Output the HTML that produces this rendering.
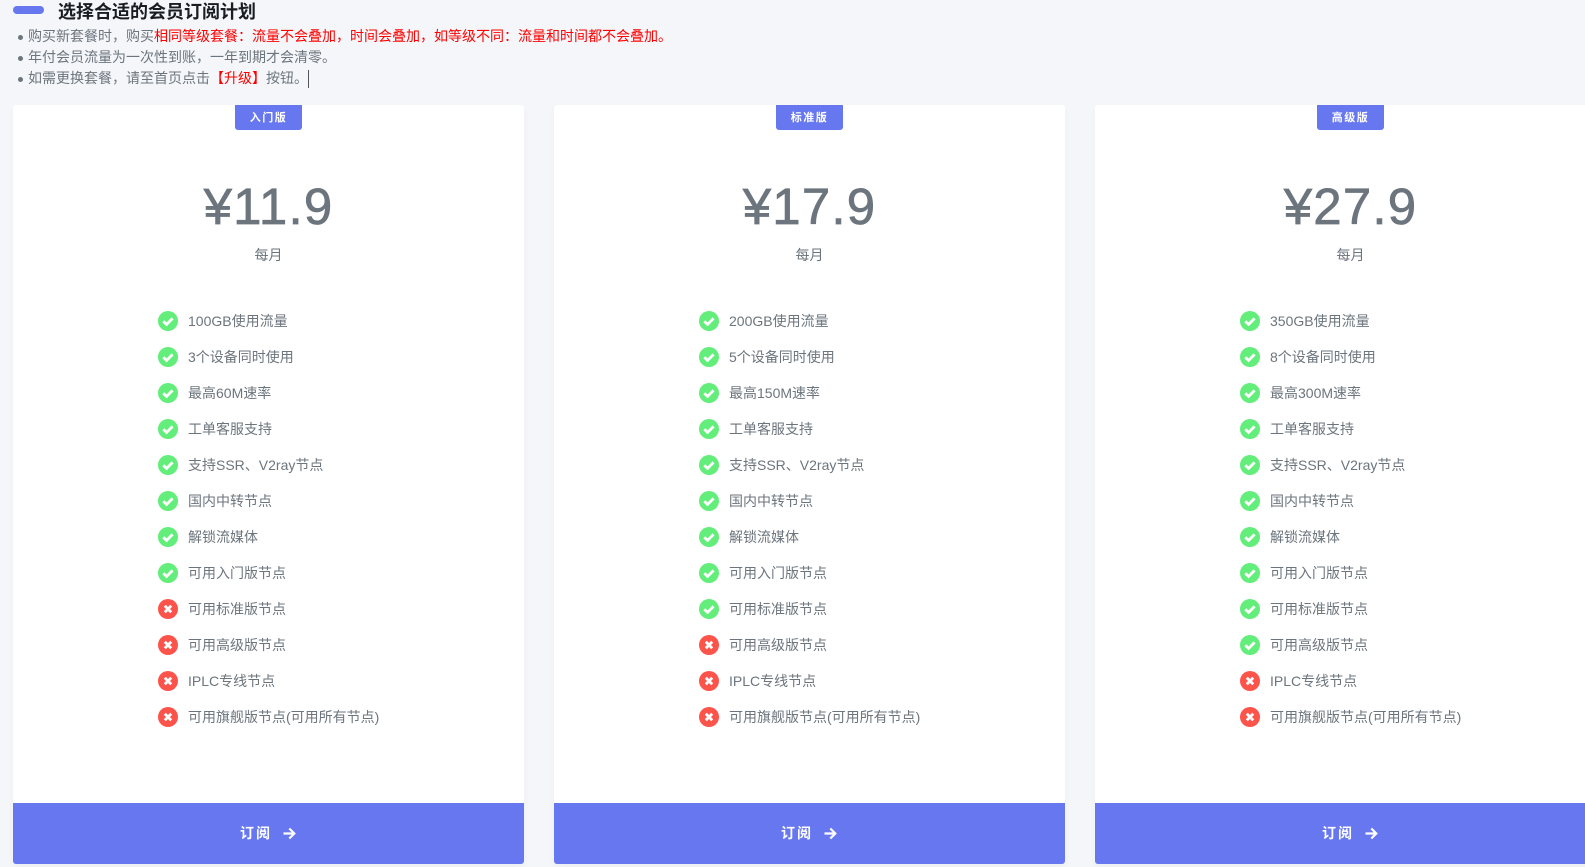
<!DOCTYPE html>
<html lang="zh-CN"><head><meta charset="utf-8"><title>选择合适的会员订阅计划</title>
<style>
*{box-sizing:border-box;margin:0;padding:0}
html,body{width:1585px;height:867px;overflow:hidden;background:#f4f6f9}
body{position:relative;font-family:"Liberation Sans","Noto Sans CJK SC",sans-serif;color:#6c757d;font-size:14px}
.pill{position:absolute;left:13px;top:6px;width:31px;height:8px;border-radius:4px;background:#6777ef}
h1{position:absolute;left:58px;top:1px;font-size:18px;line-height:22px;font-weight:700;color:#191d21;white-space:nowrap}
.n{position:absolute;left:28px;line-height:21px;white-space:nowrap}
.n:before{content:"";position:absolute;left:-10px;top:9px;width:5px;height:5px;border-radius:50%;background:#6c757d}
.n b{font-weight:400;color:#f00}
.caret{position:absolute;left:308px;top:70px;width:1px;height:18px;background:#555}
.card{position:absolute;top:105px;width:511px;height:759px;background:#fff;border-radius:3px;box-shadow:0 4px 8px rgba(0,0,0,.03)}
.badge{position:absolute;left:222px;top:0;width:67px;height:25px;background:#6777ef;border-radius:0 0 3px 3px;color:#fff;font-size:11px;font-weight:700;line-height:26px;text-align:center;letter-spacing:1.5px}
.price{position:absolute;left:0;width:100%;top:70px;text-align:center;font-size:51px;line-height:64px;letter-spacing:1.2px;-webkit-text-stroke:.7px #6c757d}
.per{position:absolute;left:0;width:100%;top:140px;text-align:center;line-height:20px}
ul{position:absolute;left:145px;top:198px;list-style:none}
li{position:relative;height:36px;line-height:36px;padding-left:30px;white-space:nowrap}
li svg{position:absolute;left:0;top:8px;width:20px;height:20px}
.btn{position:absolute;left:0;bottom:0;width:100%;height:61px;background:#6777ef;border-radius:0 0 3px 3px;color:#fff;font-weight:700;line-height:60px}
.btn span{position:absolute;left:227px;top:0;letter-spacing:2px;line-height:60px}
.btn svg{position:absolute;left:270px;top:24px;width:13px;height:13px}
</style></head><body>
<svg width="0" height="0" style="position:absolute"><defs>
<symbol id="y" viewBox="0 0 20 20"><circle cx="10" cy="10" r="10" fill="#63ed7a"/><path d="M5.3 10.2l3.3 3.2 6-6" fill="none" stroke="#fff" stroke-width="2.8"/></symbol>
<symbol id="x" viewBox="0 0 20 20"><circle cx="10" cy="10" r="10" fill="#fc544b"/><path d="M6.8 6.8l6.4 6.4M13.2 6.8l-6.4 6.4" fill="none" stroke="#fff" stroke-width="2.8"/></symbol>
<symbol id="a" viewBox="0 0 13 13"><path d="M.5 6.5h10.5M6.3 1.5l5 5-5 5" fill="none" stroke="#fff" stroke-width="2.2"/></symbol>
</defs></svg>
<div class="pill"></div>
<h1>选择合适的会员订阅计划</h1>
<div class="n" style="top:26px">购买新套餐时，购买<b>相同等级套餐：流量不会叠加，时间会叠加，如等级不同：流量和时间都不会叠加。</b></div>
<div class="n" style="top:47px">年付会员流量为一次性到账，一年到期才会清零。</div>
<div class="n" style="top:68px">如需更换套餐，请至首页点击<b>【升级】</b>按钮。</div>
<div class="caret"></div>

<div class="card" style="left:13px">
<div class="badge">入门版</div><div class="price">¥11.9</div><div class="per">每月</div>
<ul>
<li><svg><use href="#y"/></svg>100GB使用流量</li>
<li><svg><use href="#y"/></svg>3个设备同时使用</li>
<li><svg><use href="#y"/></svg>最高60M速率</li>
<li><svg><use href="#y"/></svg>工单客服支持</li>
<li><svg><use href="#y"/></svg>支持SSR、V2ray节点</li>
<li><svg><use href="#y"/></svg>国内中转节点</li>
<li><svg><use href="#y"/></svg>解锁流媒体</li>
<li><svg><use href="#y"/></svg>可用入门版节点</li>
<li><svg><use href="#x"/></svg>可用标准版节点</li>
<li><svg><use href="#x"/></svg>可用高级版节点</li>
<li><svg><use href="#x"/></svg>IPLC专线节点</li>
<li><svg><use href="#x"/></svg>可用旗舰版节点(可用所有节点)</li>
</ul>
<div class="btn"><span>订阅</span><svg><use href="#a"/></svg></div>
</div>

<div class="card" style="left:554px">
<div class="badge">标准版</div><div class="price">¥17.9</div><div class="per">每月</div>
<ul>
<li><svg><use href="#y"/></svg>200GB使用流量</li>
<li><svg><use href="#y"/></svg>5个设备同时使用</li>
<li><svg><use href="#y"/></svg>最高150M速率</li>
<li><svg><use href="#y"/></svg>工单客服支持</li>
<li><svg><use href="#y"/></svg>支持SSR、V2ray节点</li>
<li><svg><use href="#y"/></svg>国内中转节点</li>
<li><svg><use href="#y"/></svg>解锁流媒体</li>
<li><svg><use href="#y"/></svg>可用入门版节点</li>
<li><svg><use href="#y"/></svg>可用标准版节点</li>
<li><svg><use href="#x"/></svg>可用高级版节点</li>
<li><svg><use href="#x"/></svg>IPLC专线节点</li>
<li><svg><use href="#x"/></svg>可用旗舰版节点(可用所有节点)</li>
</ul>
<div class="btn"><span>订阅</span><svg><use href="#a"/></svg></div>
</div>

<div class="card" style="left:1095px">
<div class="badge">高级版</div><div class="price">¥27.9</div><div class="per">每月</div>
<ul>
<li><svg><use href="#y"/></svg>350GB使用流量</li>
<li><svg><use href="#y"/></svg>8个设备同时使用</li>
<li><svg><use href="#y"/></svg>最高300M速率</li>
<li><svg><use href="#y"/></svg>工单客服支持</li>
<li><svg><use href="#y"/></svg>支持SSR、V2ray节点</li>
<li><svg><use href="#y"/></svg>国内中转节点</li>
<li><svg><use href="#y"/></svg>解锁流媒体</li>
<li><svg><use href="#y"/></svg>可用入门版节点</li>
<li><svg><use href="#y"/></svg>可用标准版节点</li>
<li><svg><use href="#y"/></svg>可用高级版节点</li>
<li><svg><use href="#x"/></svg>IPLC专线节点</li>
<li><svg><use href="#x"/></svg>可用旗舰版节点(可用所有节点)</li>
</ul>
<div class="btn"><span>订阅</span><svg><use href="#a"/></svg></div>
</div>
</body></html>
